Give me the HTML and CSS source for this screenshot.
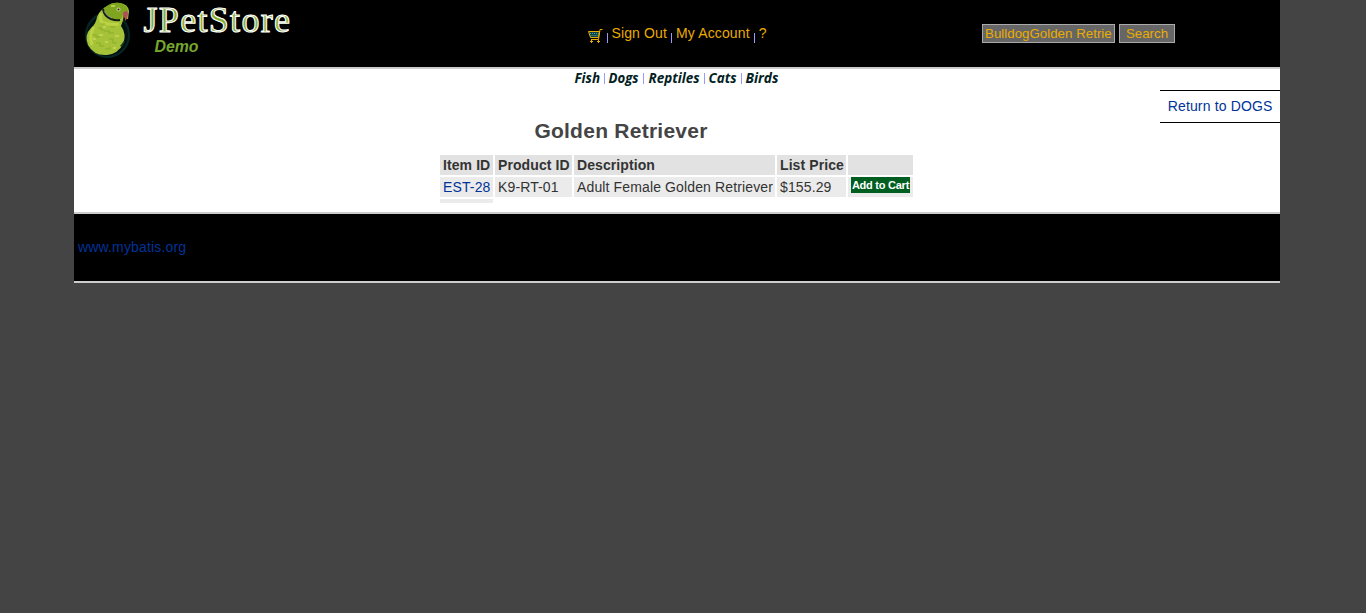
FILE: index.html
```html
<!DOCTYPE html>
<html lang="en">
<head>
<meta charset="utf-8">
<title>JPetStore Demo</title>
<link rel="stylesheet" href="styles.css">
</head>
<body>
<div class="page">
  <header class="header">
    <a class="logo">
      <svg width="230" height="66" viewBox="0 0 230 66">
        <ellipse cx="33.500" cy="35" rx="21.500" ry="22" fill="#021011" stroke="#082526" stroke-width="2"/>
        <path d="M34 6 Q38 2 46 3 Q54 4 55 11 L54 19 Q51 19 50 15 Q49 22 47 26 Q53 34 49 44 Q44 54 33 55 Q20 56 14 45 Q10 35 17 28 Q22 24 23 17 Q26 9 34 6Z" fill="#a6c238"/>
        <path d="M30 8 Q37 2 46 3 Q54 5 54 12 L49 14 Q48 21 42 20 Q31 18 30 8Z" fill="#7fa51f"/>
        <path d="M27 13 Q25 22 30 23 Q37 25 45 24 M20 27 Q15 34 18 45" fill="none" stroke="#bdd343" stroke-width="3"/>
        <path d="M24 28h3v2h3M18 35h4v2h4M30 31h5v2h5M22 43h4v3h4M35 39h4v4h4M31 49h5v-2M36 27h5M27 24h4" fill="none" stroke="#8bae2b" stroke-width="1.200"/>
        <path d="M25 35h4M31 42h3M41 36h4M19 39h3M29 27h3M39 48h3M37 6h4" fill="none" stroke="#c8d85c" stroke-width="1.500"/>
        <path d="M29 9 Q30 16 37 19 Q42 21 46 20" fill="none" stroke="#141c13" stroke-width="2"/>
        <path d="M30 11 Q33 17 38 18" fill="none" stroke="#9ba5ad" stroke-width=".7"/>
        <path d="M49 13 Q53 9 54 13 Q54 18 51 21 Q51 17 49 16Z" fill="#ad5058"/>
        <circle cx="44.500" cy="9.500" r="2" fill="#c9d49a"/><circle cx="44.500" cy="9.500" r="1" fill="#202010"/>
        <path d="M50 41l-4 5 2 1 3-6Z" fill="#163823"/>
        <text class="brand" x="69.500" y="31.500" textLength="146.500">JPetStore</text>
        <text class="demo" x="80.500" y="52" textLength="44" lengthAdjust="spacingAndGlyphs">Demo</text>
      </svg>
    </a>
    <nav class="menu">
      <svg class="cart" width="16" height="16" viewBox="0 0 16 16" fill="none" stroke="#eaac00">
        <path d="M1.500 3.500h11l-1 6h-8z" fill="#0b4145"/>
        <path d="M15.500 1.500h-2.500l-1.500 10H4"/>
        <path d="M3 5.500h9M3.500 7.500h8" stroke="#55a2a2" stroke-dasharray="1 1"/>
        <path d="M3 13.500h3M10 13.500h3M4.500 12v3M11.500 12v3"/>
      </svg>
      <i class="sep"></i><a>Sign Out</a><i class="sep"></i><a>My Account</a><i class="sep"></i><a>?</a>
    </nav>
    <form class="search">
      <input class="keyword" type="text" value="BulldogGolden Retrie"><button class="go" type="button">Search</button>
    </form>
  </header>
  <main class="content">
    <nav class="quick">
      <svg width="206" height="21" viewBox="0 0 206 21">
        <g class="cat">
          <text x="0.500" y="14" textLength="25.500" lengthAdjust="spacingAndGlyphs">Fish</text>
          <text x="34.500" y="14" textLength="30" lengthAdjust="spacingAndGlyphs">Dogs</text>
          <text x="74.500" y="14" textLength="51" lengthAdjust="spacingAndGlyphs">Reptiles</text>
          <text x="134.500" y="14" textLength="28" lengthAdjust="spacingAndGlyphs">Cats</text>
          <text x="171.500" y="14" textLength="33" lengthAdjust="spacingAndGlyphs">Birds</text>
        </g>
        <path d="M30.500 4v11M69.500 4v11M130.500 4v11M167.500 4v11" stroke="#9999ff"/>
      </svg>
    </nav>
    <div class="back"><a>Return to DOGS</a></div>
    <section class="catalog">
      <h2 class="title">Golden Retriever</h2>
      <table class="items">
        <tr><th class="c1">Item ID</th><th class="c2">Product ID</th><th class="c3">Description</th><th class="c4">List Price</th><th class="c5"></th></tr>
        <tr><td><a class="item">EST-28</a></td><td>K9-RT-01</td><td>Adult Female Golden Retriever</td><td>$155.29</td><td class="action"><a class="add">Add to Cart</a></td></tr>
        <tr class="pager"><td></td></tr>
      </table>
    </section>
  </main>
  <footer class="footer"><a>www.mybatis.org</a></footer>
</div>
</body>
</html>
```
FILE: styles.css
```css
body { margin: 0; background: #444; color: #333; font: 14px/16px "Liberation Sans", Arial, sans-serif; }
.page { width: 1206px; margin-left: 74px; }
.header { display: flex; height: 67px; background: #000; border-bottom: 2px solid #ccc; }
.logo { width: 512px; }
.logo svg { display: block; }
.brand { font: 36px "Liberation Serif", serif; fill: #86ab35; stroke: #fff; stroke-width: 1.1px; }
.demo { font: italic bold 16px "Liberation Sans", sans-serif; fill: #76a62e; }
.menu { display: flex; width: 396px; padding-top: 25px; color: #eaac00; white-space: nowrap; letter-spacing: .13px; }
.cart { margin: 3px 4px 0 1px; }
.sep { width: 1px; height: 10px; background: #9999ff; margin: 8px 4px 0; }
.cart + .sep { margin: 8px 3.5px 0 0; }
.search { display: flex; gap: 4px; margin: 0; padding-top: 24px; align-items: flex-start; }
.keyword, .go { box-sizing: border-box; height: 19px; margin: 0; border: 1px solid #aaa; border-radius: 0; background: #666; color: #eaac00; font: 13.33px "Liberation Sans", Arial, sans-serif; }
.keyword { width: 133px; padding: 0 2px; }
.go { width: 56px; padding: 0; }
.content { display: grid; grid-template-columns: 366px 1fr 120px; grid-template-rows: 21px 122px; height: 143px; background: #fff; }
.quick { grid-column: 1 / -1; padding-left: 500px; }
.quick svg { display: block; overflow: visible; }
.cat { font: italic bold 14px "Open Sans", sans-serif; fill: #022123; }
.back { grid-column: 3; grid-row: 2; height: 31px; line-height: 31px; border-top: 1px solid #000; border-bottom: 1px solid #000; text-align: right; padding-right: 7.5px; white-space: nowrap; color: #039; letter-spacing: .15px; }
.catalog { grid-column: 2; grid-row: 2; padding-top: 29px; }
.title { width: 362px; margin: 0 0 10px; text-align: center; color: #444; font-size: 21px; line-height: 24px; letter-spacing: .25px; }
.items { width: 477px; table-layout: fixed; border-collapse: separate; border-spacing: 2px; margin: 0 -2px; }
.items th, .items td { height: 20px; padding: 0 0 0 3px; box-sizing: border-box; text-align: left; white-space: nowrap; }
.items th { background: #e2e2e2; letter-spacing: .09px; }
.items td { background: #ebebeb; letter-spacing: .13px; }
.c1 { width: 53px; }
.c2 { width: 77px; }
.c3 { width: 201px; }
.c4 { width: 69px; }
.c5 { width: 65px; }
.item { color: #039; }
.items .action { vertical-align: top; }
.add { display: block; width: 59px; height: 16px; line-height: 16px; background: #005e21; color: #fff; text-align: center; font-size: 11px; font-weight: bold; letter-spacing: -.25px; }
.items .pager td { height: 4px; }
.footer { height: 67px; line-height: 66px; padding-left: 4px; background: #000; border-top: 2px solid #ccc; border-bottom: 2px solid #ccc; color: #039; letter-spacing: .16px; }
```
